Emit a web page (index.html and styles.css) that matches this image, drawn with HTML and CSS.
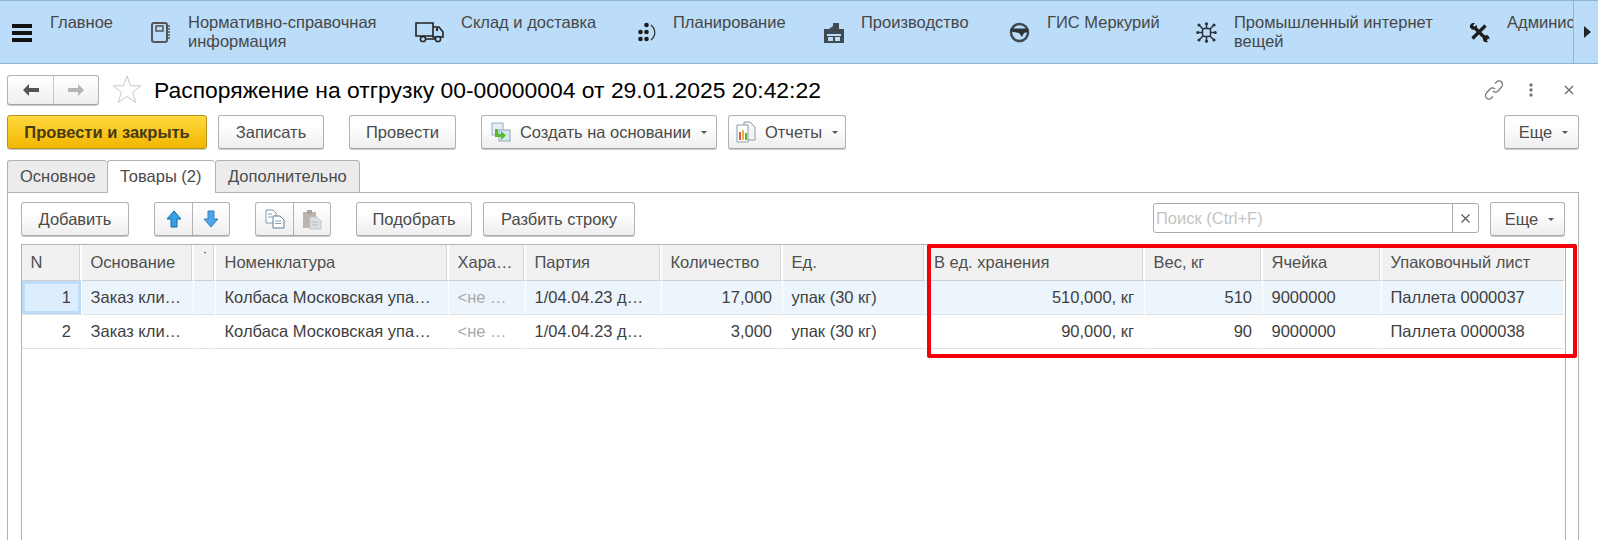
FILE: index.html
```html
<!DOCTYPE html>
<html lang="ru">
<head>
<meta charset="utf-8">
<title>Распоряжение на отгрузку</title>
<link rel="stylesheet" href="styles.css">
</head>
<body>
<div class="page">
  <header class="topnav">
    <div class="nav-scroll">
      <svg class="burger" width="20" height="18" viewBox="0 0 20 18"><path d="M0 0h20v4H0zM0 7h20v4H0zM0 14h20v4H0z" fill="#111"/></svg>
      <div class="nav-item w-main"><span class="nav-text">Главное</span></div>
      <div class="nav-item w-ref">
        <svg class="nav-icon" width="20" height="21" viewBox="0 0 20 21"><rect x="1" y="1" width="15" height="19" rx="2" fill="none" stroke="#555" stroke-width="2"/><rect x="5" y="4" width="7" height="5" fill="none" stroke="#555" stroke-width="1.5"/><path d="M17 4h2M17 7h2M17 10h2M17 13h2M17 16h2" stroke="#555" stroke-width="1.5"/></svg>
        <span class="nav-text">Нормативно-справочная информация</span>
      </div>
      <div class="nav-item w-stock">
        <svg class="nav-icon" width="29" height="21" viewBox="0 0 29 21"><path d="M1 1h17v13H1zM18 5h6l4 5v5h-10z" fill="none" stroke="#222" stroke-width="1.6"/><path d="M21 6h2v3h-2z" fill="#222"/><circle cx="8" cy="17" r="2.6" fill="#bbddf9" stroke="#222" stroke-width="1.5"/><circle cx="23" cy="17" r="2.6" fill="#bbddf9" stroke="#222" stroke-width="1.5"/><path d="M11 17h9" stroke="#222" stroke-width="1.5"/></svg>
        <span class="nav-text">Склад и доставка</span>
      </div>
      <div class="nav-item w-plan">
        <svg class="nav-icon" width="18" height="21" viewBox="0 0 18 21"><g fill="#1c1c1c"><circle cx="8.5" cy="3" r="2.3"/><circle cx="2.5" cy="10" r="2.3"/><circle cx="8.5" cy="10" r="2.3"/><circle cx="2.5" cy="17" r="2.3"/><circle cx="8.5" cy="17" r="2.3"/></g><path d="M13 3c5 4 5 11 0 15" fill="none" stroke="#333" stroke-width="1.3"/></svg>
        <span class="nav-text">Планирование</span>
      </div>
      <div class="nav-item w-prod">
        <svg class="nav-icon" width="20" height="21" viewBox="0 0 20 21"><path d="M9 1h6v6h5v14H0V7h5l4-3z" fill="#3f4a50"/><path d="M3 12h14v2H3zM4 15h5v4H4zM11 15h5v4h-5z" fill="#bbddf9"/></svg>
        <span class="nav-text">Производство</span>
      </div>
      <div class="nav-item w-gis">
        <svg class="nav-icon" width="21" height="21" viewBox="0 0 21 21"><circle cx="10.5" cy="10.5" r="8.5" fill="none" stroke="#3f4a50" stroke-width="2.5"/><path d="M2 6.500h17v3.500l-4 1-2 4-3-4-8-1.500z" fill="#2c3438"/></svg>
        <span class="nav-text">ГИС Меркурий</span>
      </div>
      <div class="nav-item w-iot">
        <svg class="nav-icon" width="21" height="21" viewBox="0 0 21 21"><rect x="6.5" y="6.5" width="8" height="8" rx="2" fill="none" stroke="#2c3438" stroke-width="1.5"/><path d="M10.5 1v5M10.5 15v5M1 10.5h5M15 10.5h5M3 3l4 4M18 3l-4 4M3 18l4-4M18 18l-4-4" stroke="#2c3438" stroke-width="1.5"/><g fill="#2c3438"><circle cx="10.5" cy="1.8" r="1.6"/><circle cx="10.5" cy="19.2" r="1.6"/><circle cx="1.8" cy="10.5" r="1.6"/><circle cx="19.2" cy="10.5" r="1.6"/><circle cx="3" cy="3" r="1.6"/><circle cx="18" cy="3" r="1.6"/><circle cx="3" cy="18" r="1.6"/><circle cx="18" cy="18" r="1.6"/></g></svg>
        <span class="nav-text">Промышленный интернет вещей</span>
      </div>
      <div class="nav-item w-admin">
        <svg class="nav-icon" width="21" height="21" viewBox="0 0 21 21"><path d="M5 5l13 13M16.500 3.500L3.500 16.500" stroke="#1c1c1c" stroke-width="3.2" fill="none"/><path d="M1 5.500C.5 2.500 2.500.5 6 1L4 3.500 5.500 5 8 3c.5 3-2.500 5.500-5 4.500z" fill="#1c1c1c"/><path d="M15 15l2-2c2 0 4 2 3.500 4.500L18.500 16 17 17.500l2 2.500c-3 1-5.500-1-5-3z" fill="#1c1c1c"/></svg>
        <span class="nav-text nav-nowrap">Администрирование</span>
      </div>
    </div>
    <div class="nav-more"><span class="tri-right"></span></div>
  </header>

  <div class="title-row">
    <div class="btn-group nav-arrows">
      <button class="seg seg-back"><svg width="18" height="14" viewBox="0 0 18 14"><path d="M7 1L1 7l6 6V9h10V5H7z" fill="#555"/></svg></button>
      <button class="seg seg-fwd"><svg width="18" height="14" viewBox="0 0 18 14"><path d="M11 1l6 6-6 6V9H1V5h10z" fill="#b5b5b5"/></svg></button>
    </div>
    <svg class="star" width="30" height="29" viewBox="0 0 30 29"><path d="M15 1l3.600 9.800H29l-8.400 6.400 3.100 10.300L15 21.400l-8.700 6.100 3.100-10.300L1 10.800h10.400z" fill="none" stroke="#c9c9c9"/></svg>
    <h1 class="title">Распоряжение на отгрузку 00-00000004 от 29.01.2025 20:42:22</h1>
    <div class="win-actions">
      <svg width="20" height="20" viewBox="0 0 20 20"><g fill="none" stroke="#777" stroke-width="1.2"><path d="M11 3.500l1.500-1.500a3.500 3.500 0 0 1 5 5L14 11a3.500 3.500 0 0 1-5 0"/><path d="M9 16.500L7.500 18a3.500 3.500 0 0 1-5-5L6 9a3.500 3.500 0 0 1 5 0"/></g></svg>
      <svg class="dots" width="4" height="14" viewBox="0 0 4 14"><g fill="#777"><circle cx="2" cy="2" r="1.7"/><circle cx="2" cy="7" r="1.7"/><circle cx="2" cy="12" r="1.7"/></g></svg>
      <svg class="close" width="10" height="10" viewBox="0 0 10 10"><path d="M1 1l8 8M9 1l-8 8" stroke="#666" stroke-width="1.2"/></svg>
    </div>
  </div>

  <div class="cmd-row">
    <button class="btn btn-primary w-post">Провести и закрыть</button>
    <button class="btn w-write ml-s">Записать</button>
    <button class="btn w-do ml-l">Провести</button>
    <button class="btn w-create ml-l">
      <svg width="20" height="20" viewBox="0 0 20 20"><rect x="1" y="1" width="11" height="12" fill="#e4edf3" stroke="#9ab0c0"/><rect x="8" y="8" width="11" height="11" fill="#dbe8f0" stroke="#8fa8ba"/><path d="M4 7h3v5h3V9l5 4.500-5 4.500v-3H4z" fill="#58b82e"/></svg>
      <span>Создать на основании</span><i class="caret"></i>
    </button>
    <button class="btn w-reports ml-s">
      <svg width="20" height="22" viewBox="0 0 20 22"><path d="M8 1h6l5 5v13H8z" fill="#f2f5f7" stroke="#8d9aa5"/><path d="M1 4h11v17H1z" fill="#fff" stroke="#8d9aa5"/><path d="M3 11h2v8H3z" fill="#e0564a"/><path d="M6 9h2v10H6z" fill="#e8b03c"/><path d="M9 12h2v7H9z" fill="#5fae3e"/></svg>
      <span>Отчеты</span><i class="caret"></i>
    </button>
    <button class="btn w-more ml-auto"><span>Еще</span><i class="caret"></i></button>
  </div>

  <div class="tabs">
    <div class="tab">Основное</div>
    <div class="tab tab-active">Товары (2)</div>
    <div class="tab">Дополнительно</div>
  </div>

  <section class="panel">
    <div class="tool-row">
      <button class="btn w-add">Добавить</button>
      <div class="btn-group ml-l">
        <button class="seg seg-up"><svg width="16" height="18" viewBox="0 0 16 18"><path d="M8 1l7 8h-4v8H5V9H1z" fill="#3aa0e6" stroke="#0b6aa8"/></svg></button>
        <button class="seg seg-down"><svg width="16" height="18" viewBox="0 0 16 18"><path d="M5 1h6v8h4l-7 8-7-8h4z" fill="#4aa8ea" stroke="#3a7fb0"/></svg></button>
      </div>
      <div class="btn-group ml-l">
        <button class="seg seg-copy"><svg width="20" height="20" viewBox="0 0 20 20"><path d="M1 1h7l3 3v10H1z" fill="#fff" stroke="#8a9aa8"/><path d="M8 7h7l4 4v8H8z" fill="#fff" stroke="#5e7a92"/><path d="M10 12h6M10 14.500h6M3 5h4M3 8h4" stroke="#8aa0b2"/></svg></button>
        <button class="seg seg-paste"><svg width="20" height="21" viewBox="0 0 20 21"><path d="M1 3h13v16H1z" fill="#bdb5ad"/><path d="M5 1h5v4H5z" fill="#a9a39c"/><path d="M8 8h7l4 4v8H8z" fill="#dcdfe1" stroke="#bfc5ca"/><path d="M10 13h6M10 16h6" stroke="#b5bcc2"/></svg></button>
      </div>
      <button class="btn w-pick ml-l">Подобрать</button>
      <button class="btn w-split ml-s">Разбить строку</button>
      <div class="search ml-auto">
        <span class="search-ph">Поиск (Ctrl+F)</span>
        <span class="search-x"><svg width="9" height="9" viewBox="0 0 9 9"><path d="M.5.5l8 8M8.500.5l-8 8" stroke="#555" stroke-width="1.1"/></svg></span>
      </div>
      <button class="btn w-more ml-s"><span>Еще</span><i class="caret"></i></button>
    </div>

    <div class="grid-wrap">
      <table class="grid">
        <colgroup>
          <col class="c-n"><col class="c-base"><col class="c-mark"><col class="c-nom"><col class="c-char"><col class="c-lot"><col class="c-qty"><col class="c-unit"><col class="c-store"><col class="c-weight"><col class="c-cell"><col class="c-pack">
        </colgroup>
        <thead>
          <tr>
            <th>N</th><th>Основание</th><th class="th-mark">˙</th><th>Номенклатура</th><th>Хара…</th><th>Партия</th><th>Количество</th><th>Ед.</th><th class="th-store">В ед. хранения</th><th>Вес, кг</th><th>Ячейка</th><th>Упаковочный лист</th>
          </tr>
        </thead>
        <tbody>
          <tr class="row-sel">
            <td class="num cell-cur">1</td><td>Заказ кли…</td><td></td><td>Колбаса Московская упа…</td><td class="muted">&lt;не …</td><td>1/04.04.23 д…</td><td class="num">17,000</td><td>упак (30 кг)</td><td class="num">510,000, кг</td><td class="num">510</td><td>9000000</td><td>Паллета 0000037</td>
          </tr>
          <tr>
            <td class="num">2</td><td>Заказ кли…</td><td></td><td>Колбаса Московская упа…</td><td class="muted">&lt;не …</td><td>1/04.04.23 д…</td><td class="num">3,000</td><td>упак (30 кг)</td><td class="num">90,000, кг</td><td class="num">90</td><td>9000000</td><td>Паллета 0000038</td>
          </tr>
        </tbody>
      </table>
    </div>
  </section>
  <div class="highlight"></div>
</div>
</body>
</html>
```

FILE: styles.css
```css
* { box-sizing: border-box; }
html, body { margin: 0; padding: 0; background: #fff; }
body { font-family: "Liberation Sans", Arial, sans-serif; font-size: 16.5px; color: #4b4b4b; }
.page { position: relative; width: 1598px; height: 540px; overflow: hidden; display: flex; flex-direction: column; }

/* top navigation */
.topnav { height: 64px; flex: none; display: flex; background: #bbddf9; border-top: 1px solid #8fb3d3; border-bottom: 1px solid #8fb3d3; }
.nav-scroll { width: 1573px; flex: none; overflow: hidden; display: flex; padding-left: 12px; }
.burger { flex: none; margin-top: 23px; margin-right: 18px; }
.nav-item { flex: none; display: flex; align-items: flex-start; padding-top: 12px; }
.nav-icon { flex: none; margin-top: 9px; }
.nav-text { font-size: 16.5px; line-height: 19px; color: #474747; margin-left: 17px; }
.nav-nowrap { white-space: nowrap; }
.w-main { width: 101px; }
.w-main .nav-text { margin-left: 0; }
.w-ref { width: 264px; }
.w-ref .nav-text { width: 205px; }
.w-stock { width: 223px; }
.w-plan { width: 186px; }
.w-prod { width: 185px; }
.w-gis { width: 187px; }
.w-iot { width: 273px; }
.w-iot .nav-text { width: 205px; }
.w-admin { width: 200px; }
.nav-more { flex: 1; border-left: 1px solid #8fb3d3; display: flex; align-items: center; justify-content: center; padding-left: 1px; }
.tri-right { width: 0; height: 0; border-left: 7px solid #222; border-top: 6px solid transparent; border-bottom: 6px solid transparent; margin-left: 2px; }

/* title row */
.title-row { height: 51px; padding: 11px 0 0 7px; flex: none; display: flex; align-items: flex-start; }
.btn-group { display: flex; flex: none; border: 1px solid #b2b2b2; border-bottom-color: #a6a6a6; border-radius: 3px; background: linear-gradient(#fff, #efefef); box-shadow: 0 1px 0 #c9c9c9; }
.seg { border: 0; padding: 0; margin: 0; background: transparent; display: flex; align-items: center; justify-content: center; height: 100%; }
.nav-arrows { width: 92px; height: 30px; }
.seg-back { width: 46px; border-right: 1px solid #c6c6c6; }
.seg-fwd { flex: 1; }
.star { margin: 0 0 0 13px; flex: none; }
.title { margin: 0 0 0 12px; font-size: 22.9px; font-weight: 400; line-height: 30px; color: #000; white-space: nowrap; }
.win-actions { margin-left: auto; display: flex; align-items: center; height: 30px; padding-right: 24px; }
.dots { margin-left: 25px; }
.close { margin-left: 31px; }

/* buttons */
.cmd-row { height: 44px; flex: none; padding: 0 0 0 7px; display: flex; align-items: flex-start; }
.tool-row { display: flex; align-items: flex-start; height: 51px; padding: 9px 13px 0 13px; flex: none; }
.btn { height: 34px; margin: 0; padding: 0; border: 1px solid #b2b2b2; border-bottom-color: #a6a6a6; border-radius: 3px; background: linear-gradient(#fff 30%, #eeeeee); box-shadow: 0 1px 0 #c9c9c9; font: 16.5px "Liberation Sans", Arial, sans-serif; color: #4b4b4b; display: flex; align-items: center; justify-content: center; flex: none; }
.btn svg { flex: none; margin-right: 9px; }
.btn-primary { background: linear-gradient(#ffd93f, #f2b600); border-color: #b8941f; font-weight: 700; color: #453a12; }
.caret { width: 0; height: 0; border-left: 3px solid transparent; border-right: 3px solid transparent; border-top: 3px solid #555; margin-left: 10px; }
.ml-s { margin-left: 11px; }
.ml-l { margin-left: 25px; }
.ml-auto { margin-left: auto; }
.w-post { width: 200px; }
.w-write { width: 106px; }
.w-do { width: 107px; }
.w-create { width: 236px; }
.w-reports { width: 118px; }
.w-more { width: 75px; padding-left: 4px; }
.cmd-row .w-more { margin-right: 19px; }
.w-add { width: 108px; }
.w-pick { width: 116px; }
.w-split { width: 152px; }
.tool-row .btn-group { height: 34px; width: 76px; }
.seg-up, .seg-copy { width: 38px; border-right: 1px solid #b2b2b2; }
.seg-down, .seg-paste { flex: 1; }

/* tabs */
.tabs { display: flex; flex: none; height: 33px; padding-left: 7px; margin-top: 1px; position: relative; z-index: 1; }
.tab { height: 33px; border: 1px solid #b2b2b2; border-right: 0; border-radius: 3px 3px 0 0; background: #ececec; color: #4b4b4b; font-size: 16.5px; line-height: 30px; padding: 0 12px; white-space: nowrap; }
.tab:first-child { width: 100px; }
.tab-active { width: 108px; background: #fff; border-bottom-color: #fff; }
.tab:last-child { width: 145px; border-right: 1px solid #b2b2b2; }

.panel { flex: 1; margin: -1px 19px 0 7px; border: 1px solid #b2b2b2; border-bottom: 0; display: flex; flex-direction: column; min-height: 0; }

/* search */
.search { width: 326px; height: 30px; margin-top: 1px; border: 1px solid #a9a9a9; border-radius: 3px; background: #fff; display: flex; flex: none; }
.search-ph { flex: 1; padding-left: 2px; color: #c4c4c4; font-size: 16.5px; line-height: 28px; }
.search-x { width: 26px; border-left: 1px solid #a9a9a9; display: flex; align-items: center; justify-content: center; }

/* table */
.grid-wrap { flex: 1; margin: 0 12px 0 13px; border: 1px solid #b2b2b2; border-bottom: 0; min-height: 0; }
.grid { table-layout: fixed; border-collapse: separate; border-spacing: 0; width: 1542px; }
.c-n { width: 60px; }
.c-base { width: 112px; }
.c-mark { width: 22px; }
.c-nom { width: 233px; }
.c-char { width: 77px; }
.c-lot { width: 136px; }
.c-qty { width: 121px; }
.c-unit { width: 143px; }
.c-store { width: 219px; }
.c-weight { width: 118px; }
.c-cell { width: 119px; }
.c-pack { width: 182px; }
.grid th { height: 36px; background: #f1f1f1; border-right: 2px solid #fff; box-shadow: inset -1px 0 0 #d4d4d4; border-bottom: 1px solid #cfcfcf; font-weight: 400; font-size: 16.5px; color: #4f4f4f; text-align: left; padding: 0 10px 1px 8.5px; white-space: nowrap; overflow: hidden; }
.grid th:last-child { border-right: 0; box-shadow: none; }
.grid .th-mark { padding: 0 0 8px 9px; }
.grid .th-store { padding-left: 8px; }
.grid td { height: 34px; font-size: 16.5px; color: #3f3f3f; padding: 0 10px 0 8.5px; white-space: nowrap; overflow: hidden; border-bottom: 1px solid #e2e2e2; border-right: 1px solid #fff; }
.grid .num { text-align: right; }
.grid .muted { color: #a9a9a9; }
.row-sel td { background: #edf5fc; }
.row-sel .cell-cur { background: #dceefd; box-shadow: inset 0 0 0 3px #bcdcf8; }

/* hand-drawn highlight on top of the screenshot */
.highlight { position: absolute; left: 927px; top: 244px; width: 650px; height: 114px; border: 4px solid #f4000c; border-radius: 2px; pointer-events: none; }
```
